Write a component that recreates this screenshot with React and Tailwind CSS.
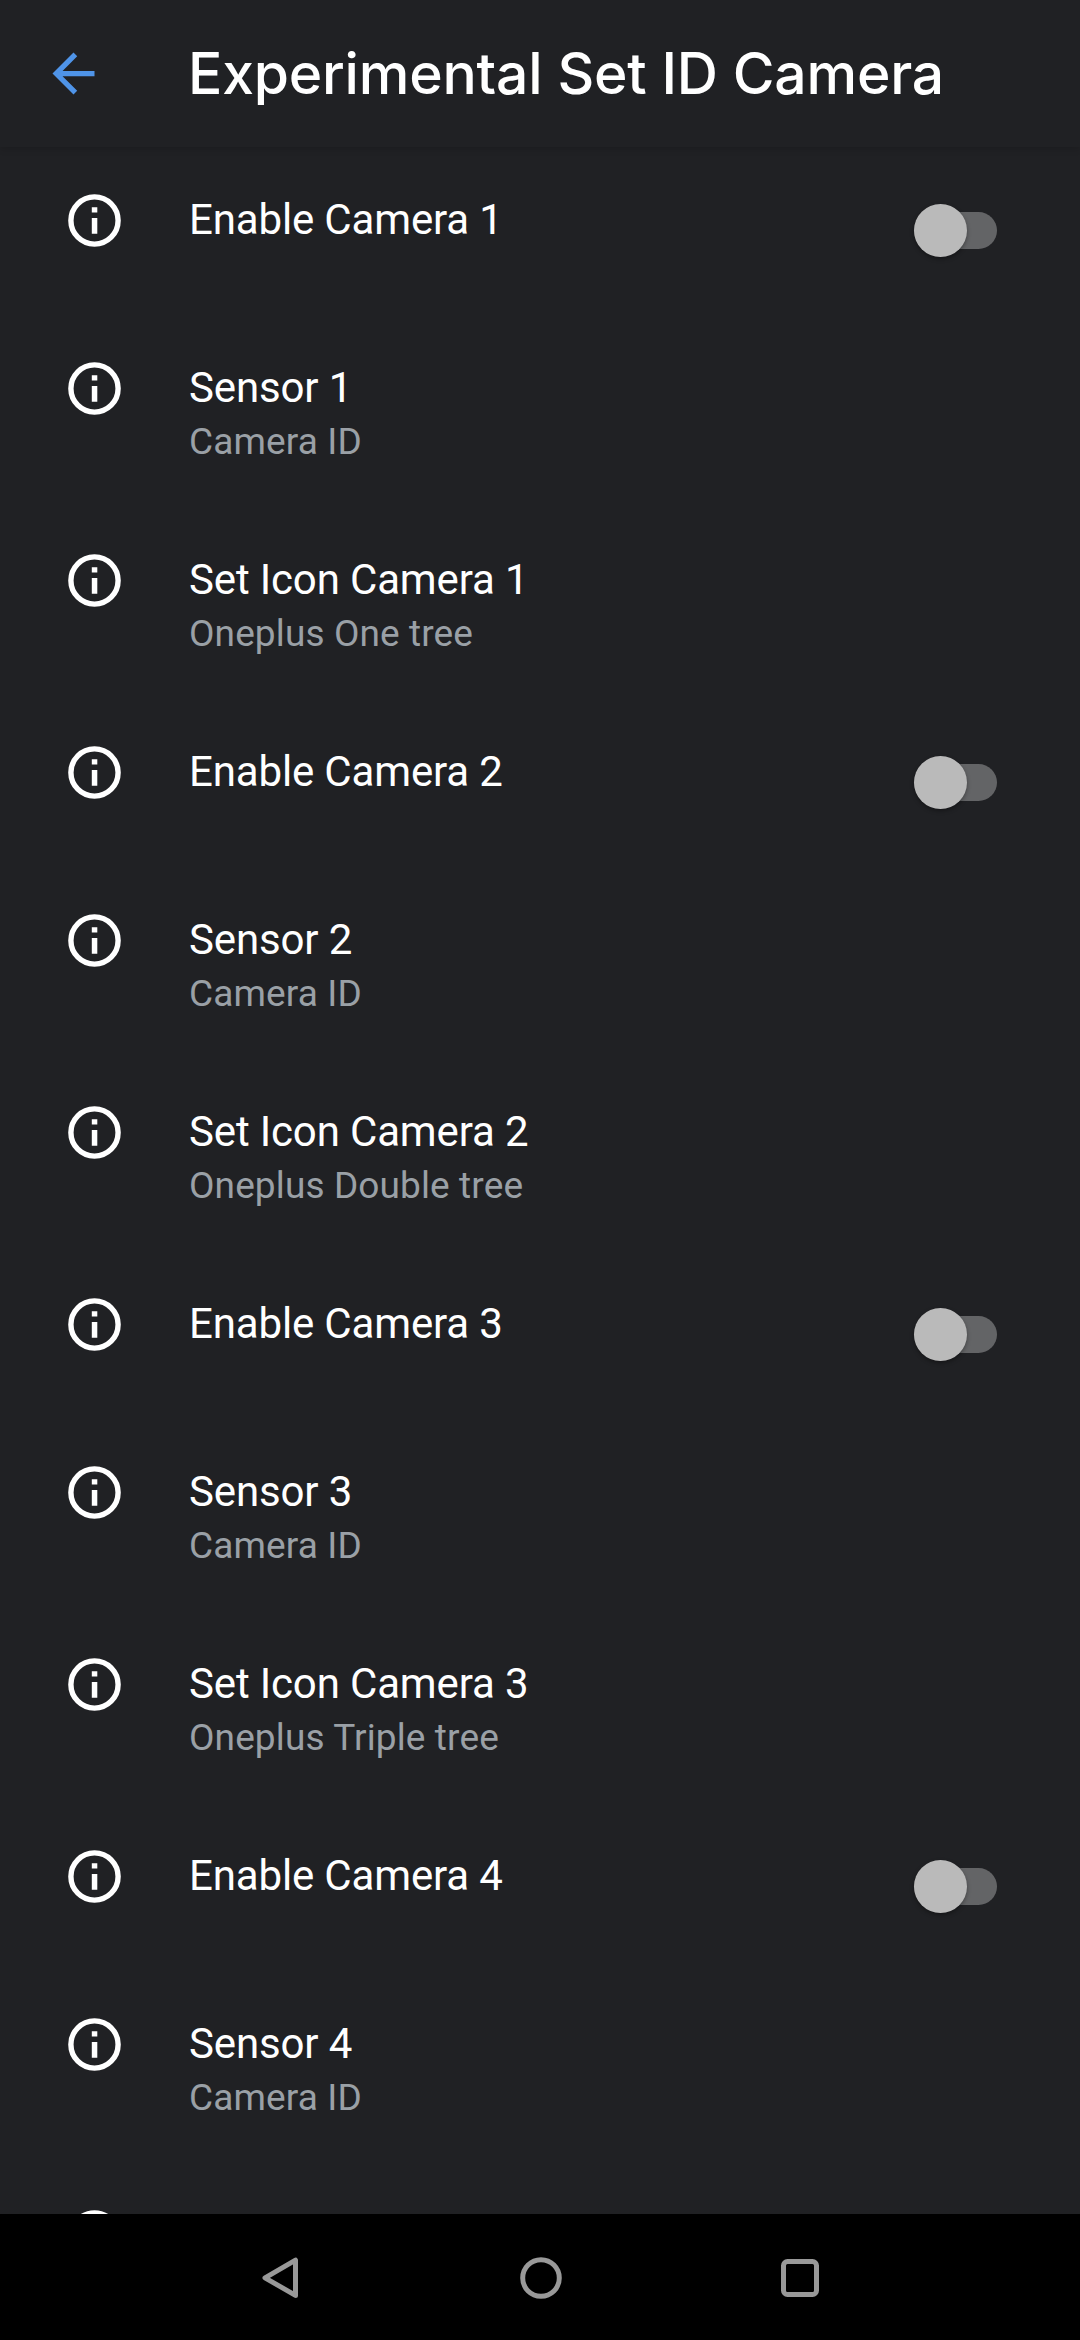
import React, { useState } from "react";
import { MdArrowBack } from "react-icons/md";

const CAMERAS = [
  { id: 1, icon: "Oneplus One tree" },
  { id: 2, icon: "Oneplus Double tree" },
  { id: 3, icon: "Oneplus Triple tree" },
  { id: 4 },
];

function InfoIcon() {
  return (
    <svg width="63" height="63" viewBox="0 0 63 63" fill="none" className="mt-[42px] shrink-0">
      <circle cx="31.5" cy="31.5" r="23.6" stroke="currentColor" strokeWidth="5.4" />
      <path d="M28.8 18.3h5.5v5.3h-5.5zM28.8 29h5.5v15.7h-5.5z" fill="currentColor" />
    </svg>
  );
}

function Row({ title, summary, children }) {
  return (
    <li className={`flex shrink-0 items-start pl-[63px] pr-[80px] ${summary ? "h-[192px]" : "h-[168px]"}`}>
      <InfoIcon />
      <div className="ml-[63px] mt-[48px] flex-1">
        {title && (
          <div className="text-[42px] leading-[50px] tracking-[-0.15px] text-white">{title}</div>
        )}
        {summary && (
          <div className="mt-[7px] text-[37px] leading-[44px] tracking-[0.12px] text-[#9aa0a6]">{summary}</div>
        )}
      </div>
      {children}
    </li>
  );
}

function Switch({ checked, onChange, label }) {
  return (
    <button
      role="switch"
      aria-checked={checked}
      aria-label={label}
      onClick={() => onChange(!checked)}
      className="mt-[57px] flex h-[53px] w-[86px] items-center"
    >
      <span className={`flex h-[37px] w-[83px] items-center rounded-full ${checked ? "justify-end bg-[#2f4a70]" : "bg-[#636466]"}`}>
        <span className={`size-[53px] shrink-0 rounded-full shadow-[0_2px_4px_rgba(0,0,0,0.35)] ${checked ? "bg-[#4a90e8]" : "bg-[#bababa]"}`} />
      </span>
    </button>
  );
}

function NavBar() {
  return (
    <nav className="flex h-[126px] shrink-0 items-center justify-center gap-[196px] bg-black text-[#999]">
      <svg width="63" height="63" viewBox="0 0 63 63" fill="none" stroke="currentColor" strokeWidth="5" strokeLinejoin="round">
        <path d="M15 31.8 45.5 14.2v35.2z" />
      </svg>
      <svg width="63" height="63" viewBox="0 0 63 63" fill="none" stroke="currentColor" strokeWidth="5">
        <circle cx="32" cy="32" r="18.3" />
      </svg>
      <svg width="63" height="63" viewBox="0 0 63 63" fill="none" stroke="currentColor" strokeWidth="5">
        <rect x="15.5" y="15.5" width="33" height="33" rx="4" />
      </svg>
    </nav>
  );
}

export default function App() {
  const [enabled, setEnabled] = useState({});

  return (
    <div className="flex h-[2340px] w-[1080px] flex-col overflow-hidden bg-[#202124] font-['Roboto',sans-serif] text-white">
      <header className="flex h-[147px] shrink-0 items-center pl-[42px] shadow-[0_2px_7px_rgba(0,0,0,0.15)]">
        <MdArrowBack size={63} className="shrink-0 text-[#4f94e8]" />
        <h1 className="ml-[83px] whitespace-nowrap font-['Inter',sans-serif] text-[57px] font-medium leading-[70px] tracking-[-0.2px]">
          Experimental Set ID Camera
        </h1>
      </header>

      <ul className="flex min-h-0 flex-1 flex-col overflow-hidden">
        {CAMERAS.map((cam) => (
          <React.Fragment key={cam.id}>
            <Row title={`Enable Camera ${cam.id}`}>
              <Switch
                label={`Enable Camera ${cam.id}`}
                checked={!!enabled[cam.id]}
                onChange={(on) => setEnabled({ ...enabled, [cam.id]: on })}
              />
            </Row>
            <Row title={`Sensor ${cam.id}`} summary="Camera ID" />
            {/* the last row is scrolled almost fully under the nav bar */}
            <Row title={cam.icon && `Set Icon Camera ${cam.id}`} summary={cam.icon} />
          </React.Fragment>
        ))}
      </ul>

      <NavBar />
    </div>
  );
}
